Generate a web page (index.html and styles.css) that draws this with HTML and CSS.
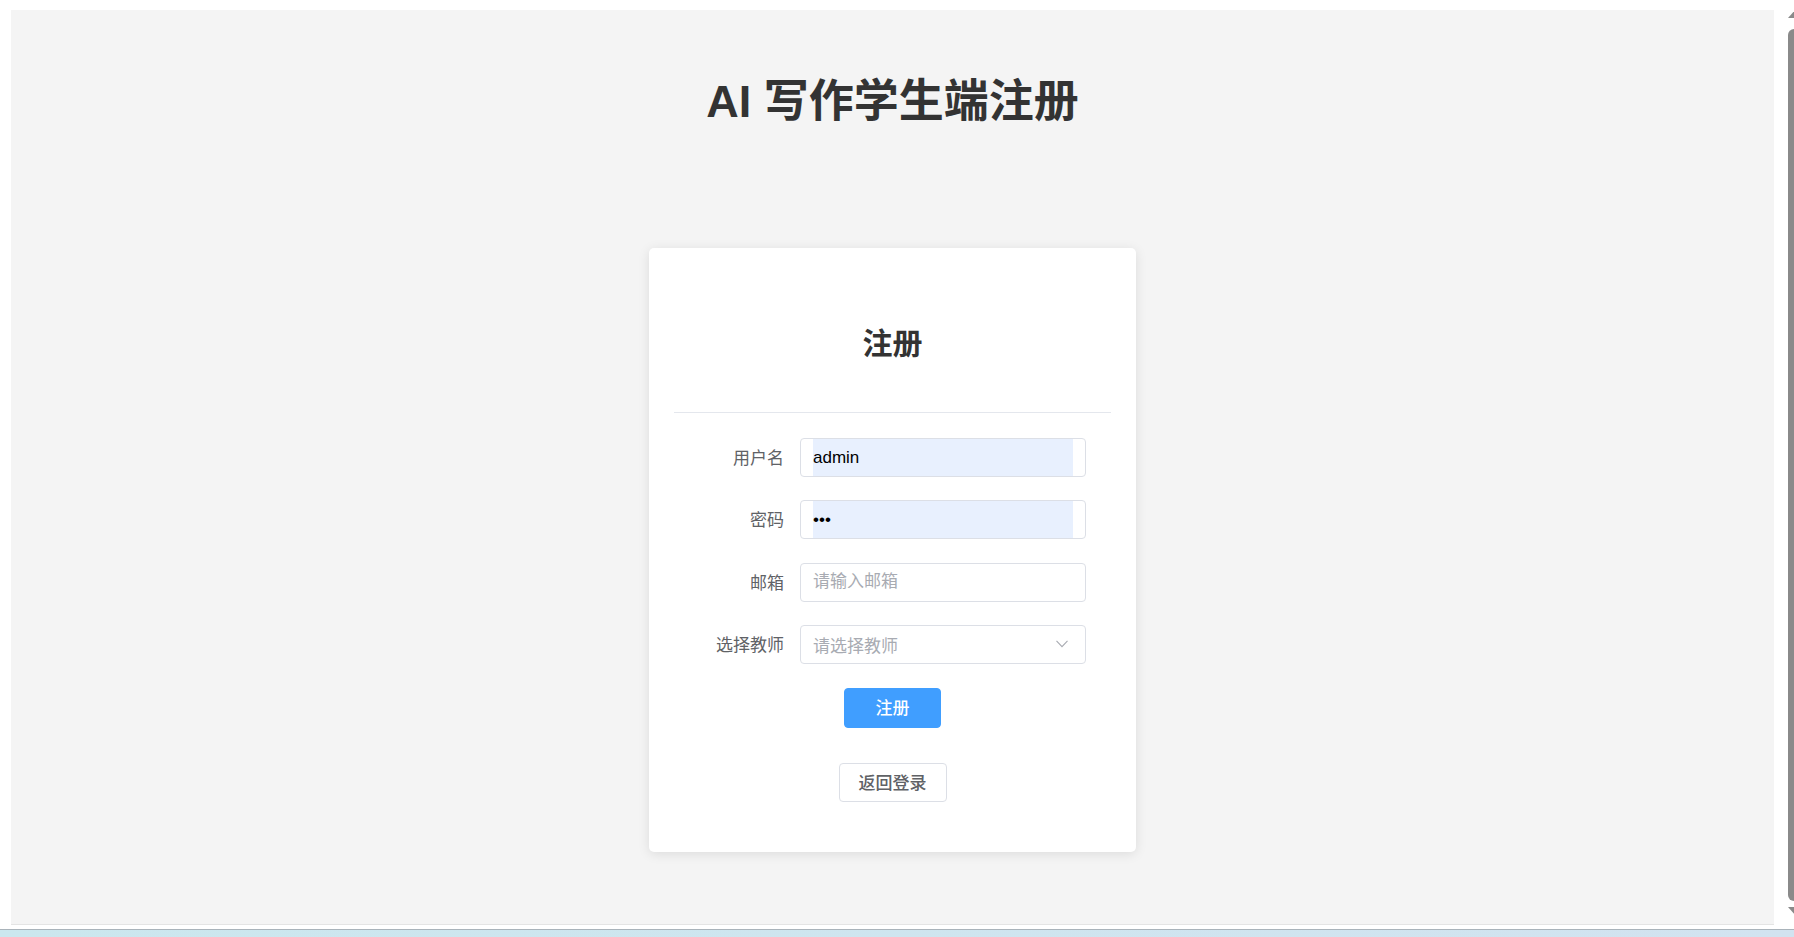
FILE: index.html
```html
<!DOCTYPE html>
<html lang="zh-CN">
<head>
    <meta charset="UTF-8">
    <meta name="viewport" content="width=device-width, initial-scale=1.0">
    <title>AI 写作学生端注册</title>
    <link rel="stylesheet" href="styles.css">
</head>
<body>
    <div class="window">
        <main class="page">
            <h1 class="page-title">AI 写作学生端注册</h1>

            <section class="register-card">
                <h2 class="card-title">注册</h2>
                <div class="divider"></div>

                <form class="register-form" onsubmit="return false">
                    <div class="form-item">
                        <label class="form-label" for="username">用户名</label>
                        <div class="input-wrapper">
                            <input id="username" class="autofill" type="text" value="admin">
                        </div>
                    </div>
                    <div class="form-item">
                        <label class="form-label" for="password">密码</label>
                        <div class="input-wrapper">
                            <input id="password" class="autofill" type="password" value="123">
                        </div>
                    </div>
                    <div class="form-item">
                        <label class="form-label" for="email">邮箱</label>
                        <div class="input-wrapper">
                            <input id="email" type="text" placeholder="请输入邮箱">
                        </div>
                    </div>
                    <div class="form-item">
                        <label class="form-label">选择教师</label>
                        <div class="input-wrapper select-wrapper">
                            <span class="select-placeholder">请选择教师</span>
                            <svg class="select-arrow" width="12" height="8" viewBox="0 0 12 8">
                                <path d="M0.5 0.8 L6 6.6 L11.5 0.8" fill="none" stroke="#a8abb2" stroke-width="1.1"/>
                            </svg>
                        </div>
                    </div>

                    <div class="actions">
                        <button class="btn btn-primary" type="submit">注册</button>
                        <button class="btn btn-plain" type="button">返回登录</button>
                    </div>
                </form>
            </section>
        </main>

        <!-- fake browser scrollbar -->
        <div class="scrollbar">
            <span class="arrow-up"></span>
            <span class="thumb"></span>
            <span class="arrow-down"></span>
        </div>
    </div>
    <div class="taskbar"></div>
</body>
</html>
```

FILE: styles.css
```css
/* General Styling */
body {
    margin: 0;
    height: 937px;
    overflow: hidden;
    display: flex;
    flex-direction: column;
    background: #fff;
    font-family: "Liberation Sans", "Noto Sans CJK SC", sans-serif;
    color: #333;
}

.window {
    height: 929px;
    display: flex;
    border-top-left-radius: 10px;
    border-bottom-left-radius: 10px;
    background: #fff;
}

/* Page area */
.page {
    flex: 1;
    margin: 10px 12px 5px 11px;
    background: #f4f4f4;
    box-shadow: 0 1px 0 #e4e4e4;
    display: flex;
    flex-direction: column;
    align-items: center;
}

.page-title {
    margin: 65px 0 119px;
    font-size: 45px;
    line-height: 54px;
    font-weight: bold;
    color: #333;
}

/* Register Card */
.register-card {
    width: 487px;
    box-sizing: border-box;
    padding: 0 25px 50px;
    background: #fff;
    border-radius: 5px;
    box-shadow: 0 2px 12px rgba(0, 0, 0, 0.1);
}

.card-title {
    margin: 75px 0 47px;
    font-size: 30px;
    line-height: 42px;
    font-weight: bold;
    text-align: center;
    color: #333;
}

.divider {
    height: 1px;
    background: #e4e7ed;
    margin-bottom: 25px;
}

/* Form */
.form-item {
    display: flex;
    align-items: center;
    margin-bottom: 23.33px;
}

.form-label {
    width: 126px;
    box-sizing: border-box;
    padding: 0 16px 2px 0;
    text-align: right;
    font-size: 17px;
    color: #606266;
}

.input-wrapper {
    width: 286px;
    height: 39px;
    box-sizing: border-box;
    padding: 0 12px;
    border: 1px solid #dcdfe6;
    border-radius: 4px;
    background: #fff;
    display: flex;
    align-items: center;
}

.input-wrapper input {
    flex: 1;
    width: 100%;
    height: 100%;
    border: none;
    outline: none;
    padding: 0;
    margin: 0;
    background: transparent;
    font-family: inherit;
    font-size: 17px;
    color: #000;
}

.input-wrapper input::placeholder {
    color: #a8abb2;
}

.input-wrapper input.autofill {
    background: #e8f0fe;
}

.select-wrapper {
    justify-content: space-between;
    padding-right: 17px;
}

.select-placeholder {
    font-size: 17px;
    color: #a8abb2;
}

/* Buttons */
.actions {
    display: flex;
    flex-direction: column;
    align-items: center;
}

.btn {
    box-sizing: border-box;
    padding: 0 0 3px;
    border-radius: 4px;
    font-family: inherit;
    font-size: 17px;
    font-weight: 500;
    cursor: pointer;
}

.btn-primary {
    width: 97px;
    height: 40px;
    margin-top: 1px;
    background: #409eff;
    border: 1px solid #409eff;
    color: #fff;
}

.btn-plain {
    width: 108px;
    height: 39px;
    margin-top: 35px;
    background: #fff;
    border: 1px solid #dcdfe6;
    color: #606266;
}

/* Scrollbar */
.scrollbar {
    width: 8px;
    padding-top: 10px;
    display: flex;
    flex-direction: column;
    align-items: flex-start;
}

.arrow-up,
.arrow-down {
    width: 0;
    height: 0;
    margin-left: 2px;
    border-left: 7px solid transparent;
    border-right: 7px solid transparent;
}

.arrow-up {
    border-bottom: 8px solid #8a8a8a;
}

.arrow-down {
    border-top: 8px solid #8a8a8a;
    margin-top: 6px;
}

.thumb {
    width: 14px;
    height: 872px;
    margin: 11px 0 0 2px;
    background: #8a8a8a;
    border-radius: 6px;
}

/* Bottom strip */
.taskbar {
    flex: 1;
    border-top: 1px solid #a9b3ba;
    background: linear-gradient(90deg, #cbe7ee, #d2e3f0);
}
```
